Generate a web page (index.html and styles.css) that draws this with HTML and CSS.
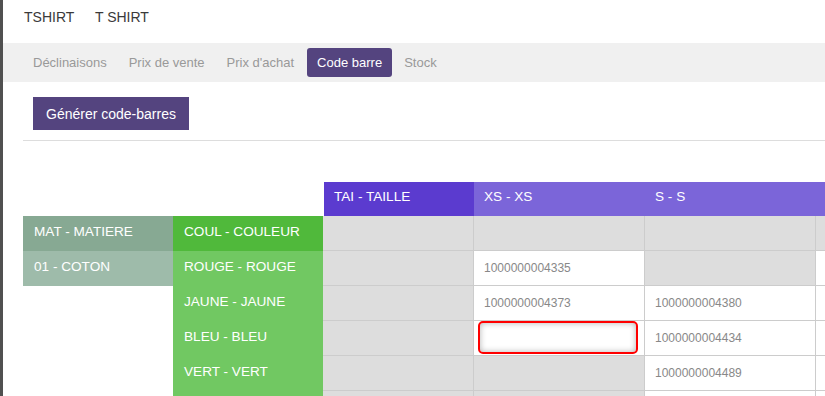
FILE: index.html
```html
<!DOCTYPE html>
<html lang="fr">
<head>
    <meta charset="UTF-8">
    <meta name="viewport" content="width=device-width, initial-scale=1.0">
    <title>TSHIRT - Code barre</title>
    <link rel="stylesheet" href="styles.css">
</head>
<body>
    <!-- Product title -->
    <div class="product-title">
        <span class="product-code">TSHIRT</span>
        <span class="product-name">T SHIRT</span>
    </div>

    <!-- Tabs -->
    <div class="tabs">
        <a class="tab">Déclinaisons</a>
        <a class="tab">Prix de vente</a>
        <a class="tab">Prix d'achat</a>
        <a class="tab active">Code barre</a>
        <a class="tab">Stock</a>
    </div>

    <div class="content">
        <button class="btn-generate">Générer code-barres</button>
        <hr class="separator">

        <div class="matrix-wrap">
            <div class="matrix">
                <!-- header -->
                <div class="blank"></div>
                <div class="blank"></div>
                <div class="head head-main">TAI - TAILLE</div>
                <div class="head">XS - XS</div>
                <div class="head">S - S</div>
                <div class="head"></div>

                <!-- attributes -->
                <div class="label label-mat">MAT - MATIERE</div>
                <div class="label label-coul">COUL - COULEUR</div>
                <div class="cell"></div>
                <div class="cell"></div>
                <div class="cell"></div>
                <div class="cell"></div>

                <div class="label label-mat-val">01 - COTON</div>
                <div class="label label-coul-val">ROUGE - ROUGE</div>
                <div class="cell"></div>
                <div class="cell white">1000000004335</div>
                <div class="cell"></div>
                <div class="cell white"></div>

                <div class="blank"></div>
                <div class="label label-coul-val">JAUNE - JAUNE</div>
                <div class="cell"></div>
                <div class="cell white">1000000004373</div>
                <div class="cell white">1000000004380</div>
                <div class="cell white"></div>

                <div class="blank"></div>
                <div class="label label-coul-val">BLEU - BLEU</div>
                <div class="cell"></div>
                <div class="cell white cell-input"><input type="text" class="barcode-input"></div>
                <div class="cell white">1000000004434</div>
                <div class="cell white"></div>

                <div class="blank"></div>
                <div class="label label-coul-val">VERT - VERT</div>
                <div class="cell"></div>
                <div class="cell"></div>
                <div class="cell white">1000000004489</div>
                <div class="cell white"></div>

                <div class="blank"></div>
                <div class="label label-coul-val"></div>
                <div class="cell"></div>
                <div class="cell"></div>
                <div class="cell white"></div>
                <div class="cell white"></div>
            </div>
        </div>
    </div>
</body>
</html>
```

FILE: styles.css
```css
html, body {
    height: 100%;
}

body {
    font-family: "Liberation Sans", Arial, sans-serif;
    margin: 0;
    padding: 0;
    border-left: 3px solid #505050;
    overflow: hidden;
    color: #333;
}

.product-title {
    height: 43px;
    box-sizing: border-box;
    padding: 9px 21px 0;
    font-size: 14px;
    line-height: 16px;
    color: #3a3a3a;
}

.product-code {
    margin-right: 17px;
}

.tabs {
    display: flex;
    align-items: center;
    height: 39px;
    background: #f0f0f0;
    padding: 0 20px;
}

.tab {
    font-size: 13px;
    line-height: 29px;
    color: #999;
    padding: 0 10px;
    margin-right: 2px;
    border-radius: 3px;
    cursor: pointer;
}

.tab.active {
    background-color: #54447f;
    color: #fff;
    margin-left: 1px;
}

.content {
    padding: 15px 0 0 20px;
}

.btn-generate {
    margin-left: 10px;
    height: 33px;
    padding: 0 13px;
    border: none;
    border-radius: 0;
    background-color: #54447f;
    color: #fff;
    font-family: "Liberation Sans", Arial, sans-serif;
    font-size: 14px;
    cursor: pointer;
}

.separator {
    border: none;
    border-top: 1px solid #ddd;
    margin: 10px 0 41px;
}

.matrix-wrap {
    overflow: hidden;
}

.matrix {
    display: grid;
    grid-template-columns: 150px 150px 151px repeat(3, 171px);
    grid-template-rows: 34px;
    grid-auto-rows: 35px;
    width: max-content;
}

.matrix > div {
    box-sizing: border-box;
}

.head {
    background-color: #7b65d9;
    color: #fff;
    font-size: 13.6px;
    padding: 7px 10px 0;
}

.head-main {
    background-color: #5b3bcf;
    margin-left: 1px;
}

.label {
    color: #fff;
    font-size: 13.6px;
    padding: 8px 11px 0;
}

.label-mat {
    background-color: #87a993;
}

.label-mat-val {
    background-color: #9ebbaa;
}

.label-coul {
    background-color: #50b93b;
}

.label-coul-val {
    background-color: #71c862;
}

.cell {
    background-color: #ddd;
    border-right: 1px solid #ccc;
    border-bottom: 1px solid #ccc;
    color: #888;
    font-size: 12px;
    padding: 0 10px;
    display: flex;
    align-items: center;
}

.cell.white {
    background-color: #fff;
}

.cell-input {
    padding: 0 6px 1px 4px;
    align-items: stretch;
}

.barcode-input {
    width: 100%;
    height: 33px;
    box-sizing: border-box;
    border: 2px solid #f00;
    border-radius: 5px;
    box-shadow: inset 0 0 6px rgba(0, 0, 0, 0.3);
    outline: none;
    padding: 0 8px;
}
```
